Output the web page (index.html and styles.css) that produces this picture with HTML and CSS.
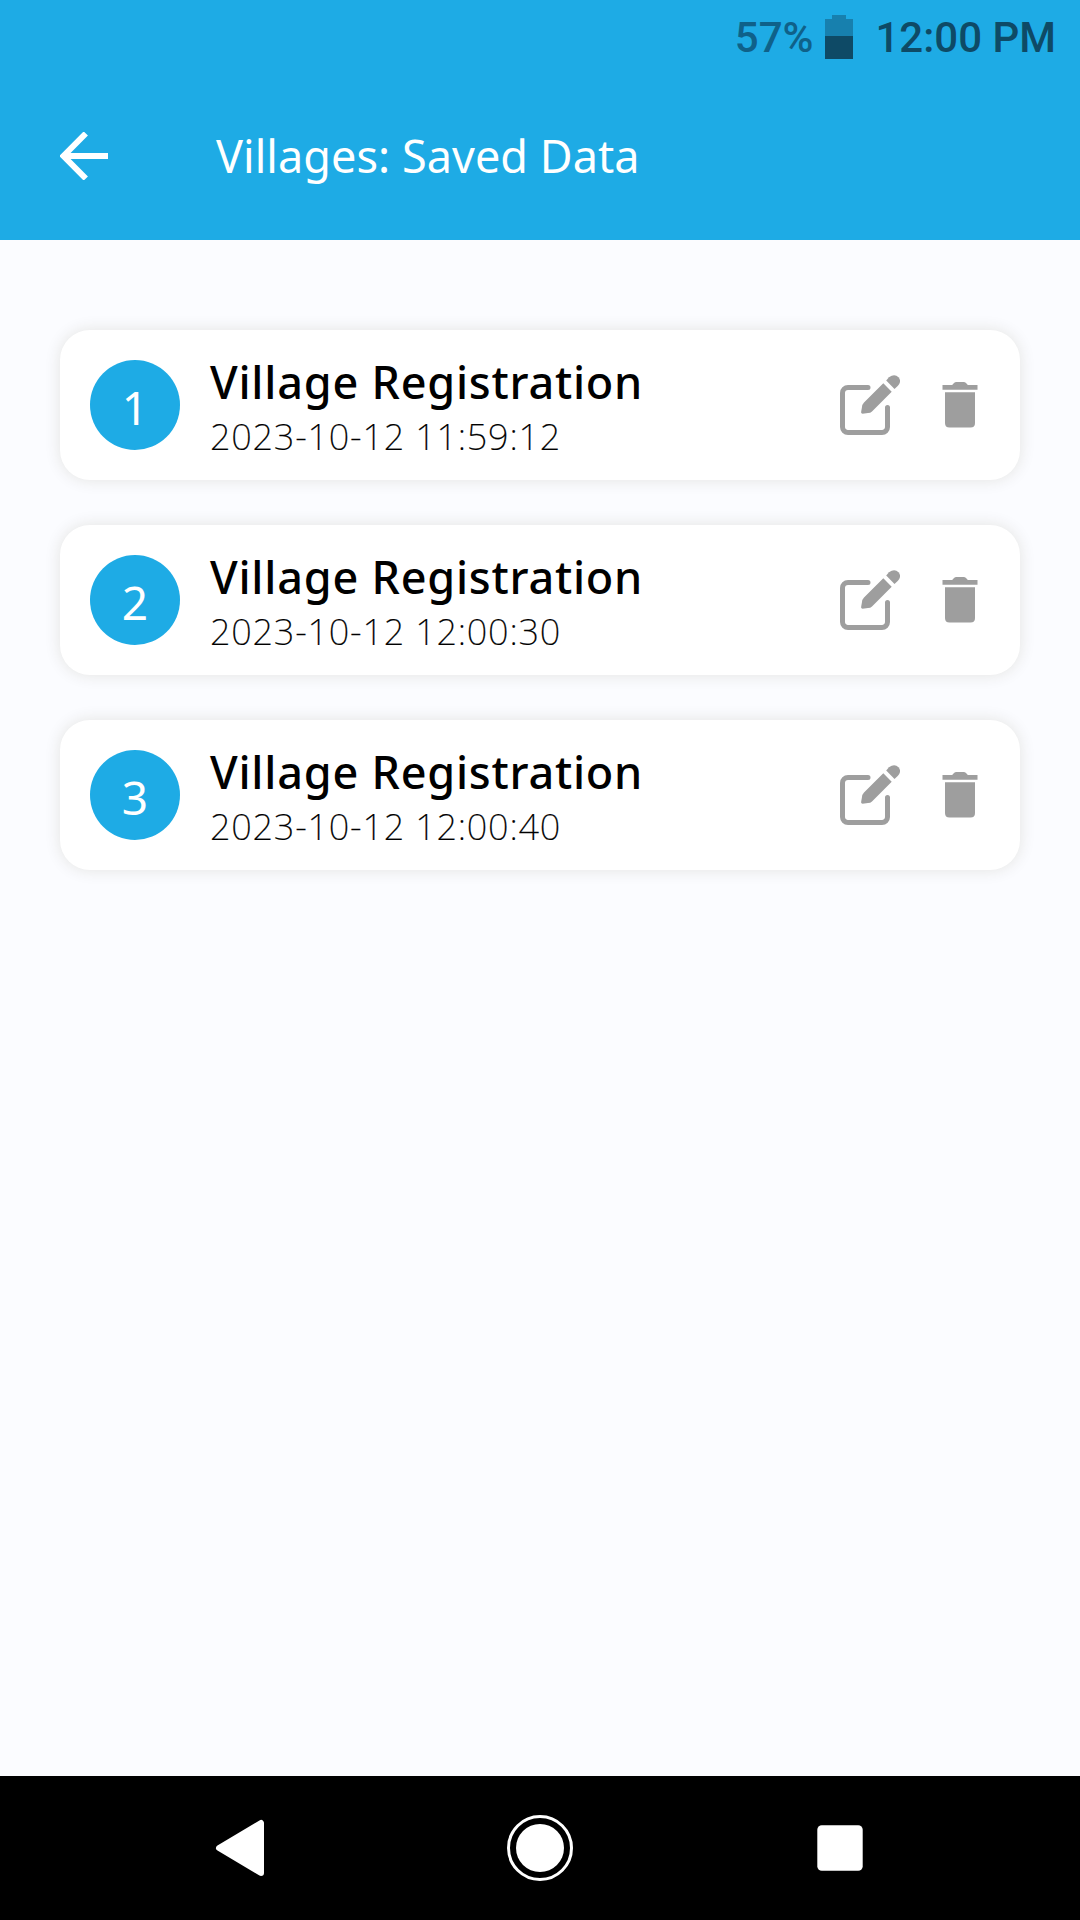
FILE: index.html
```html
<!DOCTYPE html>
<html lang="en">
<head>
  <meta charset="UTF-8" />
  <meta name="viewport" content="width=device-width, initial-scale=1" />
  <title>Villages: Saved Data</title>
  <link rel="stylesheet" href="styles.css">
</head>
<body>
  <!-- shared icons -->
  <svg class="sprite" aria-hidden="true">
    <symbol id="icon-edit" viewBox="0 0 60 60">
      <path d="M28 12.5H8a5.5 5.5 0 0 0-5.5 5.500V52a5.500 5.500 0 0 0 5.500 5.500H42a5.500 5.500 0 0 0 5.500-5.500V32.500" fill="none" stroke="currentColor" stroke-width="5" stroke-linecap="round" />
      <path d="M43.300 8.300L51.700 16.700L32 36.500Q30.500 38 28 38L22.500 38.800Q20.500 38.500 21.200 36.500L22 32Q22.200 29.500 24 27.600Z" fill="currentColor" />
      <path d="M46.200 5.400L49 2.300Q54.500-2 58.500 2.300Q62 6.500 57.700 11L54.500 14Z" fill="currentColor" />
    </symbol>
    <symbol id="icon-trash" viewBox="0 0 36 46">
      <path d="M0.500 3H9.500Q10.500 3 11.500 1.500Q12.500 0 14 0H22Q23.500 0 24.500 1.500Q25.500 3 26.500 3H35.500V7.800H0.500Z" fill="currentColor" />
      <path d="M3 10.300H33V41Q33 45.500 28.500 45.500H7.500Q3 45.500 3 41Z" fill="currentColor" />
    </symbol>
  </svg>

  <header>
    <div class="status-bar">
      <span class="percent">57%</span>
      <svg class="battery" viewBox="0 0 28 44">
        <path d="M0 4H7V0H21V4H28V21H0Z" fill="#1780ae" />
        <path d="M0 21H28V44H0Z" fill="#0e4a66" />
      </svg>
      <span class="clock">12:00 PM</span>
    </div>
    <div class="app-bar">
      <svg class="back" viewBox="0 0 48 48">
        <path d="M25.800 1.500L3.500 24L25.800 46.500M3.500 24H48" fill="none" stroke="#fff" stroke-width="6" />
      </svg>
      <h1>Villages: Saved Data</h1>
    </div>
  </header>

  <main>
    <div class="card">
      <div class="number">1</div>
      <div class="info">
        <h2>Village Registration</h2>
        <p>2023-10-12 11:59:12</p>
      </div>
      <svg class="edit"><use href="#icon-edit" /></svg>
      <svg class="trash"><use href="#icon-trash" /></svg>
    </div>
    <div class="card">
      <div class="number">2</div>
      <div class="info">
        <h2>Village Registration</h2>
        <p>2023-10-12 12:00:30</p>
      </div>
      <svg class="edit"><use href="#icon-edit" /></svg>
      <svg class="trash"><use href="#icon-trash" /></svg>
    </div>
    <div class="card">
      <div class="number">3</div>
      <div class="info">
        <h2>Village Registration</h2>
        <p>2023-10-12 12:00:40</p>
      </div>
      <svg class="edit"><use href="#icon-edit" /></svg>
      <svg class="trash"><use href="#icon-trash" /></svg>
    </div>
  </main>

  <nav>
    <svg viewBox="0 0 66 66">
      <path d="M12 33L54 8V58Z" fill="#fff" stroke="#fff" stroke-width="6" stroke-linejoin="round" />
    </svg>
    <svg viewBox="0 0 66 66">
      <circle cx="33" cy="33" r="31.500" fill="none" stroke="#fff" stroke-width="3" />
      <circle cx="33" cy="33" r="24" fill="#fff" />
    </svg>
    <svg viewBox="0 0 66 66">
      <rect x="10.300" y="10.300" width="45.400" height="45.400" rx="4.500" fill="#fff" />
    </svg>
  </nav>
</body>
</html>
```
FILE: styles.css
```css
* {
  box-sizing: border-box;
}

body {
  margin: 0;
  height: 1920px;
  display: flex;
  flex-direction: column;
  background: #fbfcff;
  font-family: 'Noto Sans', sans-serif;
  color: #000;
}

h1, h2, p {
  margin: 0;
}

.sprite {
  display: none;
}

header {
  height: 240px;
  background: #1eabe5;
}

.status-bar {
  height: 72px;
  display: flex;
  justify-content: flex-end;
  align-items: center;
  padding: 2px 24px 0 0;
  font-family: Roboto, sans-serif;
  font-size: 42px;
  font-weight: 500;
  color: #0e4a66;
}

.percent {
  color: #0f6189;
}

.battery {
  width: 28px;
  height: 44px;
  margin: 0 22px 0 12px;
}

.app-bar {
  height: 168px;
  display: flex;
  align-items: center;
  padding: 0 60px;
}

.back {
  width: 48px;
  height: 48px;
}

h1 {
  margin-left: 108px;
  color: #fff;
  font-size: 45px;
  font-weight: 400;
  line-height: 60px;
  letter-spacing: 0.05px;
}

main {
  flex: 1;
  display: flex;
  flex-direction: column;
  gap: 45px;
  padding: 90px 60px;
}

.card {
  height: 150px;
  display: flex;
  align-items: center;
  padding: 0 42px 0 30px;
  background: #fff;
  border-radius: 30px;
  box-shadow: 0 0 16px rgba(60, 50, 0, 0.12);
}

.number {
  width: 90px;
  height: 90px;
  border-radius: 50%;
  background: #1eabe5;
  color: #fff;
  font-size: 46px;
  line-height: 95px;
  text-align: center;
}

.info {
  flex: 1;
  margin-left: 30px;
  padding-top: 4px;
}

h2 {
  font-size: 45px;
  font-weight: 500;
  line-height: 60px;
  letter-spacing: 0.77px;
}

p {
  font-size: 36px;
  font-weight: 200;
  line-height: 50px;
  letter-spacing: 0.77px;
  -webkit-text-stroke: 0.2px #000;
}

.edit {
  width: 60px;
  height: 60px;
  color: #9e9e9e;
}

.trash {
  width: 36px;
  height: 46px;
  margin-left: 42px;
  color: #9e9e9e;
}

nav {
  height: 144px;
  display: flex;
  justify-content: space-between;
  padding: 39px 207px;
  background: #000;
}

nav svg {
  width: 66px;
  height: 66px;
}
```
